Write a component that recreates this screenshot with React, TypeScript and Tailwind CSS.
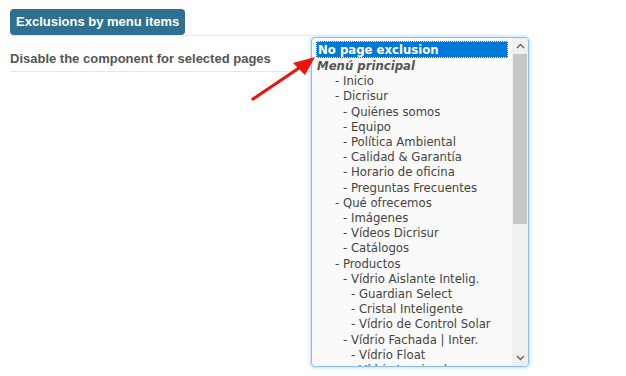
const items: [string, number][] = [
  ['Inicio', 1],
  ['Dicrisur', 1],
  ['Quiénes somos', 2],
  ['Equipo', 2],
  ['Política Ambiental', 2],
  ['Calidad & Garantía', 2],
  ['Horario de oficina', 2],
  ['Preguntas Frecuentes', 2],
  ['Qué ofrecemos', 1],
  ['Imágenes', 2],
  ['Vídeos Dicrisur', 2],
  ['Catálogos', 2],
  ['Productos', 1],
  ['Vídrio Aislante Intelig.', 2],
  ['Guardian Select', 3],
  ['Cristal Inteligente', 3],
  ['Vídrio de Control Solar', 3],
  ['Vídrio Fachada | Inter.', 2],
  ['Vídrio Float', 3],
  ['Vídrio Laminado', 3],
];

const indent: Record<number, string> = {
  1: 'pl-[19px]',
  2: 'pl-[27px]',
  3: 'pl-[35px]',
};

function MenuSelect() {
  return (
    <div className="flex w-[218px] h-[330px] bg-[#fafafa] border border-[#8dbdeb] rounded-[4px] shadow-[0_0_4px_rgba(90,160,230,0.55)] overflow-hidden">
      {/* Options */}
      <div className="flex-1 pt-[3px] pl-[4px] pr-[4px] overflow-hidden text-[13px] text-[#444] font-['DejaVu_Sans_Condensed','DejaVu_Sans',sans-serif]">
        <div className="h-[17px] leading-[17px] bg-[#0078d7] text-white font-bold pl-[2px] outline-1 outline-dotted outline-white -outline-offset-1">
          No page exclusion
        </div>
        <div className="leading-[15.2px] pl-[1px] font-bold italic text-[#555]">
          Menú principal
        </div>
        {items.map(([label, depth]) => (
          <div
            key={label}
            className={`leading-[15.2px] whitespace-nowrap ${indent[depth]}`}
          >
            - {label}
          </div>
        ))}
      </div>

      {/* Scrollbar */}
      <div className="w-[16px] flex flex-col bg-[#f0f0f0]">
        <div className="h-[16px] flex items-center justify-center text-[#606060]">
          <svg width="9" height="6" viewBox="0 0 9 6" fill="none" stroke="currentColor" strokeWidth="1.4">
            <path d="M1 5l3.5-3.5L8 5" />
          </svg>
        </div>
        <div className="h-[170px] mx-[1px] bg-[#c8c8c8]" />
        <div className="flex-1" />
        <div className="h-[16px] flex items-center justify-center text-[#606060]">
          <svg width="9" height="6" viewBox="0 0 9 6" fill="none" stroke="currentColor" strokeWidth="1.4">
            <path d="M1 1l3.5 3.5L8 1" />
          </svg>
        </div>
      </div>
    </div>
  );
}

export default function App() {
  return (
    <div className="relative w-[626px] h-[376px] bg-white font-['Liberation_Sans',Arial,sans-serif] overflow-hidden">
      <div className="pt-[9px] pl-[10px]">
        {/* Section heading */}
        <div className="inline-block h-[26px] px-[6px] leading-[26px] rounded-[4px] bg-[#2f6f8f] text-white text-[13px] font-bold">
          Exclusions by menu items
        </div>

        {/* Setting row */}
        <div className="flex items-start">
          <div className="w-[301px] h-[37px] pt-[15px] leading-[15px] border-t border-b border-[#e6e6e6] text-[13px] font-bold text-[#555]">
            Disable the component for selected pages
          </div>
          <div className="mt-[2px]">
            <MenuSelect />
          </div>
        </div>
      </div>

      {/* Annotation arrow */}
      <svg className="absolute inset-0 pointer-events-none" width="626" height="376">
        <line x1="253" y1="99" x2="302" y2="66" stroke="#e8160f" strokeWidth="3.2" strokeLinecap="round" />
        <polygon points="315,57 293,63 305,75" fill="#e8160f" />
      </svg>
    </div>
  );
}
